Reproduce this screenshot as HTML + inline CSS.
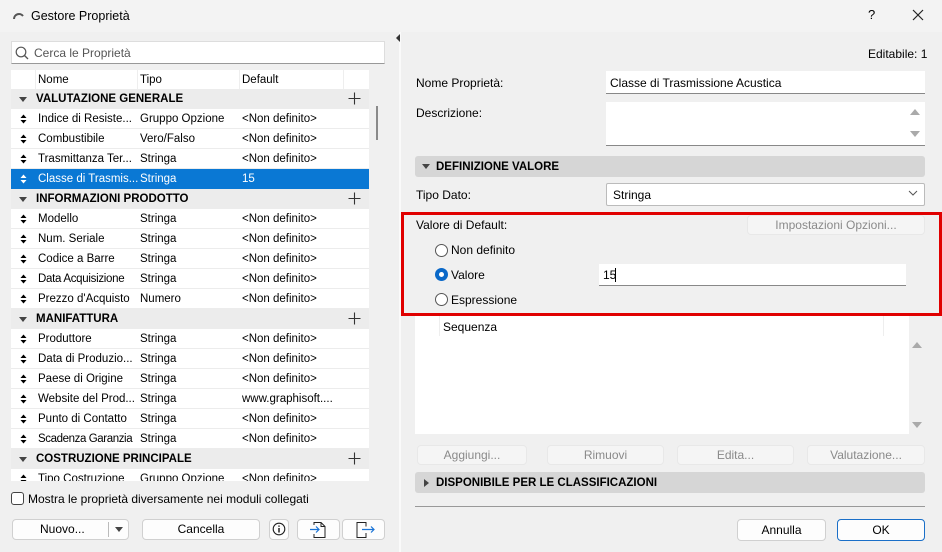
<!DOCTYPE html>
<html><head><meta charset="utf-8"><style>
*{box-sizing:border-box;margin:0;padding:0}
body{width:942px;height:552px;overflow:hidden;background:#f0f0f0;font-family:"Liberation Sans",sans-serif;font-size:12px;color:#000;position:relative}
.a{position:absolute}
.t{position:absolute;white-space:nowrap;line-height:14px}
.row{position:absolute;left:11px;width:358px;height:20px;background:#fff;border-bottom:1px solid #ececec;font-size:11.5px}
.row span{position:absolute;top:0;line-height:20px;white-space:nowrap}
.grp{position:absolute;left:11px;width:358px;height:20px;background:#ececec}
.grp b{position:absolute;left:25px;top:0;line-height:21px;font-size:11.5px}
.tri{position:absolute;width:0;height:0;border-left:4px solid transparent;border-right:4px solid transparent;border-top:5px solid #444}
.plus{position:absolute;right:8px;top:3px}
.arr{position:absolute;left:9px;top:5px}
.btn{position:absolute;height:21px;background:#fdfdfd;border:1px solid #d0d0d0;border-radius:4px;text-align:center;line-height:19px}
.dis{background:#f5f5f5;border-color:#e8e8e8;color:#8a8a8a}
.inp{position:absolute;background:#fff;border-bottom:1px solid #888}
.sec{position:absolute;left:415px;width:510px;height:21px;background:#d6d6d6;border-radius:3px}
.sec b{position:absolute;left:21px;top:0;line-height:22px;font-size:11.5px}
.rad{position:absolute;width:13px;height:13px;border:1px solid #555;border-radius:50%;background:#fff}
</style></head><body>
<svg width="0" height="0" style="position:absolute"><defs>
<symbol id="ud" viewBox="0 0 7 10"><path d="M0.5 4L3.5 0.5 6.5 4Z M0.5 6L3.5 9.5 6.5 6Z" fill="currentColor"/></symbol>
<symbol id="pl" viewBox="0 0 13 13"><path d="M6.5 0.5v12M0.5 6.5h12" stroke="#333" stroke-width="1.1"/></symbol>
</defs></svg>
<!-- title -->
<div class="a" style="left:0;top:0;width:942px;height:32px;background:#f3f3f3"></div>
<svg class="a" style="left:12px;top:10px" width="12" height="10"><path d="M2 9 A5 5 0 0 1 11 6" fill="none" stroke="#555" stroke-width="2"/></svg>
<div class="t" style="left:31px;top:9px;font-size:12.5px">Gestore Proprietà</div>
<div class="t" style="left:868px;top:8px;font-size:13px">?</div>
<svg class="a" style="left:912px;top:9px" width="12" height="12"><path d="M1 1L11 11M11 1L1 11" stroke="#222" stroke-width="1.2"/></svg>
<!-- splitter -->
<div class="a" style="left:399px;top:32px;width:2px;height:520px;background:#fafafa"></div>
<div class="a" style="left:396px;top:34px;width:0;height:0;border-top:4px solid transparent;border-bottom:4px solid transparent;border-right:4px solid #333"></div>
<!-- search -->
<div class="inp" style="left:11px;top:41px;width:374px;height:23px;border:1px solid #ddd;border-bottom-color:#999"></div>
<svg class="a" style="left:15px;top:46px" width="14" height="14"><circle cx="6" cy="6" r="4.8" fill="none" stroke="#555" stroke-width="1.2"/><path d="M9.5 9.5L13 13" stroke="#555" stroke-width="1.3"/></svg>
<div class="t" style="left:34px;top:46px;color:#555">Cerca le Proprietà</div>
<!-- table header -->
<div class="a" style="left:11px;top:70px;width:358px;height:19px;background:#fff"></div>
<div class="a" style="left:35px;top:70px;width:1px;height:19px;background:#eee"></div>
<div class="a" style="left:137px;top:70px;width:1px;height:19px;background:#eee"></div>
<div class="a" style="left:239px;top:70px;width:1px;height:19px;background:#eee"></div>
<div class="a" style="left:343px;top:70px;width:1px;height:19px;background:#eee"></div>
<div class="t" style="left:38px;top:73px;font-size:11.5px">Nome</div>
<div class="t" style="left:140px;top:73px;font-size:11.5px">Tipo</div>
<div class="t" style="left:242px;top:73px;font-size:11.5px">Default</div>
<div class="a" style="left:376px;top:106px;width:2px;height:34px;background:#8a8a8a"></div>
<div class="a" style="left:11px;top:89px;width:358px;height:392px;overflow:hidden">
<div style="position:relative;left:-11px;top:-89px">
<div class="grp" style="top:89px"><div class="tri" style="left:8px;top:8px"></div><b>VALUTAZIONE GENERALE</b><svg class="plus" width="13" height="13"><use href="#pl"/></svg></div>
<div class="row" style="top:109px"><svg class="arr" width="7" height="10"><use href="#ud"/></svg><span style="left:27px">Indice di Resiste...</span><span style="left:129px">Gruppo Opzione</span><span style="left:231px">&lt;Non definito&gt;</span></div>
<div class="row" style="top:129px"><svg class="arr" width="7" height="10"><use href="#ud"/></svg><span style="left:27px">Combustibile</span><span style="left:129px">Vero/Falso</span><span style="left:231px">&lt;Non definito&gt;</span></div>
<div class="row" style="top:149px"><svg class="arr" width="7" height="10"><use href="#ud"/></svg><span style="left:27px">Trasmittanza Ter...</span><span style="left:129px">Stringa</span><span style="left:231px">&lt;Non definito&gt;</span></div>
<div class="row" style="top:169px;background:#0a78d4;color:#fff;border:none"><svg class="arr" width="7" height="10"><use href="#ud"/></svg><span style="left:27px">Classe di Trasmis...</span><span style="left:129px">Stringa</span><span style="left:231px">15</span></div>
<div class="grp" style="top:189px"><div class="tri" style="left:8px;top:8px"></div><b>INFORMAZIONI PRODOTTO</b><svg class="plus" width="13" height="13"><use href="#pl"/></svg></div>
<div class="row" style="top:209px"><svg class="arr" width="7" height="10"><use href="#ud"/></svg><span style="left:27px">Modello</span><span style="left:129px">Stringa</span><span style="left:231px">&lt;Non definito&gt;</span></div>
<div class="row" style="top:229px"><svg class="arr" width="7" height="10"><use href="#ud"/></svg><span style="left:27px">Num. Seriale</span><span style="left:129px">Stringa</span><span style="left:231px">&lt;Non definito&gt;</span></div>
<div class="row" style="top:249px"><svg class="arr" width="7" height="10"><use href="#ud"/></svg><span style="left:27px">Codice a Barre</span><span style="left:129px">Stringa</span><span style="left:231px">&lt;Non definito&gt;</span></div>
<div class="row" style="top:269px"><svg class="arr" width="7" height="10"><use href="#ud"/></svg><span style="left:27px;letter-spacing:-0.3px">Data Acquisizione</span><span style="left:129px">Stringa</span><span style="left:231px">&lt;Non definito&gt;</span></div>
<div class="row" style="top:289px"><svg class="arr" width="7" height="10"><use href="#ud"/></svg><span style="left:27px">Prezzo d'Acquisto</span><span style="left:129px">Numero</span><span style="left:231px">&lt;Non definito&gt;</span></div>
<div class="grp" style="top:309px"><div class="tri" style="left:8px;top:8px"></div><b>MANIFATTURA</b><svg class="plus" width="13" height="13"><use href="#pl"/></svg></div>
<div class="row" style="top:329px"><svg class="arr" width="7" height="10"><use href="#ud"/></svg><span style="left:27px">Produttore</span><span style="left:129px">Stringa</span><span style="left:231px">&lt;Non definito&gt;</span></div>
<div class="row" style="top:349px"><svg class="arr" width="7" height="10"><use href="#ud"/></svg><span style="left:27px">Data di Produzio...</span><span style="left:129px">Stringa</span><span style="left:231px">&lt;Non definito&gt;</span></div>
<div class="row" style="top:369px"><svg class="arr" width="7" height="10"><use href="#ud"/></svg><span style="left:27px">Paese di Origine</span><span style="left:129px">Stringa</span><span style="left:231px">&lt;Non definito&gt;</span></div>
<div class="row" style="top:389px"><svg class="arr" width="7" height="10"><use href="#ud"/></svg><span style="left:27px">Website del Prod...</span><span style="left:129px">Stringa</span><span style="left:231px">www.graphisoft....</span></div>
<div class="row" style="top:409px"><svg class="arr" width="7" height="10"><use href="#ud"/></svg><span style="left:27px">Punto di Contatto</span><span style="left:129px">Stringa</span><span style="left:231px">&lt;Non definito&gt;</span></div>
<div class="row" style="top:429px"><svg class="arr" width="7" height="10"><use href="#ud"/></svg><span style="left:27px;letter-spacing:-0.4px">Scadenza Garanzia</span><span style="left:129px">Stringa</span><span style="left:231px">&lt;Non definito&gt;</span></div>
<div class="grp" style="top:449px"><div class="tri" style="left:8px;top:8px"></div><b>COSTRUZIONE PRINCIPALE</b><svg class="plus" width="13" height="13"><use href="#pl"/></svg></div>
<div class="row" style="top:469px"><svg class="arr" width="7" height="10"><use href="#ud"/></svg><span style="left:27px">Tipo Costruzione</span><span style="left:129px">Gruppo Opzione</span><span style="left:231px">&lt;Non definito&gt;</span></div>
</div></div>
<!-- checkbox -->
<div class="a" style="left:11px;top:492px;width:13px;height:13px;border:1px solid #444;border-radius:3px;background:#fff"></div>
<div class="t" style="left:28px;top:492px">Mostra le proprietà diversamente nei moduli collegati</div>
<!-- left buttons -->
<div class="btn" style="left:12px;top:519px;width:117px"><span style="position:absolute;left:27px">Nuovo...</span></div>
<div class="a" style="left:108px;top:522px;width:1px;height:15px;background:#bbb"></div>
<div class="a" style="left:115px;top:527px;width:0;height:0;border-left:4px solid transparent;border-right:4px solid transparent;border-top:5px solid #444"></div>
<div class="btn" style="left:142px;top:519px;width:118px">Cancella</div>
<div class="btn" style="left:269px;top:519px;width:20px"></div>
<svg class="a" style="left:272px;top:522px" width="14" height="14"><circle cx="7" cy="7" r="5.8" fill="none" stroke="#222" stroke-width="1.1"/><path d="M7 6v4.5M7 3.5v1.3" stroke="#222" stroke-width="1.5"/></svg>
<div class="btn" style="left:297px;top:519px;width:43px"></div>
<svg class="a" style="left:309px;top:521px" width="20" height="18"><path d="M5 4V1.5h7l4 4V16.5H5V13" fill="none" stroke="#222"/><path d="M12 1.5v4h4" fill="none" stroke="#222"/><path d="M1 8.5h9M7 5.5l3 3-3 3" fill="none" stroke="#1a73d6" stroke-width="1.2"/></svg>
<div class="btn" style="left:342px;top:519px;width:43px"></div>
<svg class="a" style="left:354px;top:521px" width="22" height="18"><path d="M12 5.5V1.5H3v15h9V12" fill="none" stroke="#222"/><path d="M8 8.5h12M17 5.5l3 3-3 3" fill="none" stroke="#1a73d6" stroke-width="1.2"/></svg>
<!-- right pane -->
<div class="t" style="left:868px;top:47px">Editabile: 1</div>
<div class="t" style="left:416px;top:76px">Nome Proprietà:</div>
<div class="inp" style="left:606px;top:71px;width:319px;height:23px"></div>
<div class="t" style="left:610px;top:76px">Classe di Trasmissione Acustica</div>
<div class="t" style="left:416px;top:106px">Descrizione:</div>
<div class="inp" style="left:606px;top:102px;width:319px;height:44px"></div>
<div class="a" style="left:910px;top:109px;width:0;height:0;border-left:5px solid transparent;border-right:5px solid transparent;border-bottom:6px solid #aaa"></div>
<div class="a" style="left:910px;top:131px;width:0;height:0;border-left:5px solid transparent;border-right:5px solid transparent;border-top:6px solid #aaa"></div>
<div class="sec" style="top:156px"><div class="tri" style="left:7px;top:8px"></div><b>DEFINIZIONE VALORE</b></div>
<div class="t" style="left:416px;top:188px">Tipo Dato:</div>
<div class="a" style="left:606px;top:183px;width:319px;height:23px;background:#fff;border:1px solid #bbb;border-radius:2px"></div>
<div class="t" style="left:613px;top:188px">Stringa</div>
<svg class="a" style="left:908px;top:190px" width="10" height="7"><path d="M1 1l4 4 4-4" fill="none" stroke="#555"/></svg>
<!-- red box -->
<div class="a" style="left:401px;top:212px;width:541px;height:104px;border:3px solid #e00000"></div>
<div class="t" style="left:416px;top:218px">Valore di Default:</div>
<div class="btn dis" style="left:747px;top:215px;width:178px;height:20px;line-height:18px">Impostazioni Opzioni...</div>
<div class="rad" style="left:435px;top:244px"></div>
<div class="t" style="left:451px;top:243px">Non definito</div>
<div class="rad" style="left:435px;top:268px;border:4px solid #0a68c8"></div>
<div class="t" style="left:451px;top:268px">Valore</div>
<div class="inp" style="left:599px;top:264px;width:307px;height:22px"></div>
<div class="t" style="left:603px;top:268px">15</div>
<div class="a" style="left:615px;top:268px;width:1px;height:14px;background:#000"></div>
<div class="rad" style="left:435px;top:293px"></div>
<div class="t" style="left:451px;top:293px">Espressione</div>
<!-- list -->
<div class="a" style="left:415px;top:316px;width:494px;height:118px;background:#fff"></div>
<div class="a" style="left:439px;top:316px;width:1px;height:20px;background:#eee"></div>
<div class="a" style="left:883px;top:316px;width:1px;height:20px;background:#eee"></div>
<div class="t" style="left:443px;top:320px">Sequenza</div>
<div class="a" style="left:912px;top:342px;width:0;height:0;border-left:5px solid transparent;border-right:5px solid transparent;border-bottom:6px solid #aaa"></div>
<div class="a" style="left:912px;top:422px;width:0;height:0;border-left:5px solid transparent;border-right:5px solid transparent;border-top:6px solid #aaa"></div>
<div class="btn dis" style="left:417px;top:445px;width:110px;height:20px;line-height:18px">Aggiungi...</div>
<div class="btn dis" style="left:547px;top:445px;width:117px;height:20px;line-height:18px">Rimuovi</div>
<div class="btn dis" style="left:677px;top:445px;width:117px;height:20px;line-height:18px">Edita...</div>
<div class="btn dis" style="left:807px;top:445px;width:118px;height:20px;line-height:18px">Valutazione...</div>
<div class="sec" style="top:472px"><div class="a" style="left:9px;top:7px;width:0;height:0;border-top:4px solid transparent;border-bottom:4px solid transparent;border-left:5px solid #444"></div><b>DISPONIBILE PER LE CLASSIFICAZIONI</b></div>
<div class="a" style="left:415px;top:506px;width:510px;height:1px;background:#999"></div>
<div class="btn" style="left:737px;top:519px;width:89px;height:22px;line-height:20px">Annulla</div>
<div class="btn" style="left:837px;top:519px;width:88px;height:22px;line-height:20px;border-color:#1a6fc8">OK</div>
</body></html>
